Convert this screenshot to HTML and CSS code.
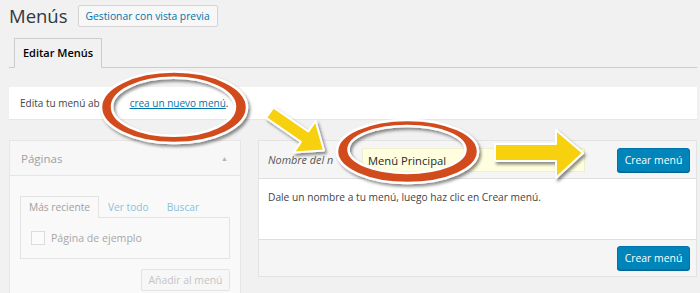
FILE: index.html
```html
<!DOCTYPE html>
<html lang="es">
<head>
<meta charset="utf-8">
<title>Menús</title>
<link rel="stylesheet" href="styles.css">
</head>
<body>
<div class="wrap">
  <div class="head">
    <h1 class="title">Menús</h1>
    <a class="btn-secondary">Gestionar con vista previa</a>
  </div>
  <nav class="tabs">
    <a class="tab">Editar Menús</a>
  </nav>
  <div class="notice">
    <p>Edita tu menú ab<span class="gap"></span><a class="link">crea un nuevo menú</a>.</p>
  </div>
  <div class="cols">
    <div class="side">
      <div class="side-head">
        <span>Páginas</span>
        <span class="caret">▲</span>
      </div>
      <div class="side-body">
        <div class="itabs">
          <span class="itab active">Más reciente</span>
          <span class="itab">Ver todo</span>
          <span class="itab">Buscar</span>
        </div>
        <div class="itab-panel">
          <label class="check"><span class="box"></span>Página de ejemplo</label>
        </div>
        <div class="side-actions">
          <span class="btn-disabled">Añadir al menú</span>
        </div>
      </div>
    </div>
    <div class="main">
      <div class="main-head">
        <span class="name-label">Nombre del n</span>
        <span class="name-input">Menú Principal</span>
        <span class="spacer"></span>
        <a class="btn-primary">Crear menú</a>
      </div>
      <div class="main-body">
        <p>Dale un nombre a tu menú, luego haz clic en Crear menú.</p>
      </div>
      <div class="main-foot">
        <a class="btn-primary">Crear menú</a>
      </div>
    </div>
  </div>
  <svg class="annot" width="700" height="293" viewBox="0 0 700 293">
    <defs>
      <filter id="sh" x="-20%" y="-30%" width="140%" height="160%">
        <feDropShadow dx="2" dy="2.5" stdDeviation="1.6" flood-color="#000" flood-opacity="0.45"/>
      </filter>
    </defs>
    <path filter="url(#sh)" fill-rule="evenodd" fill="#d24c1f" stroke="#fff" stroke-width="2.5"
      d="M101,107.3 a73,35.7 0 1,0 146,0 a73,35.7 0 1,0 -146,0 Z
         M112,106.8 a61.5,29 0 1,0 123,0 a61.5,29 0 1,0 -123,0 Z"/>
    <path filter="url(#sh)" fill-rule="evenodd" fill="#d24c1f" stroke="#fff" stroke-width="2.5"
      d="M337,151.5 a70.5,31.5 0 1,0 141,0 a70.5,31.5 0 1,0 -141,0 Z
         M348.5,149.5 a58.5,23.5 0 1,0 117,0 a58.5,23.5 0 1,0 -117,0 Z"/>
    <polygon filter="url(#sh)" points="273.4,107.4 308.3,131.5 315.6,121 324,150.5 293.6,152.6 300.9,141.9 266.1,117.9" fill="#f7d10f" stroke="#fff" stroke-width="2" stroke-linejoin="round"/>
    <polygon filter="url(#sh)" points="495,144 556,144 556,130 583,153 556,178 556,161 495,161" fill="#f7d10f" stroke="#fff" stroke-width="2" stroke-linejoin="round"/>
  </svg>
</div>
</body>
</html>
```
FILE: styles.css
```css
html, body {
  margin: 0;
  padding: 0;
  background: #f1f1f1;
}
body {
  font-family: "Open Sans", "Noto Sans", sans-serif;
  font-size: 10.2px;
  color: #444;
  width: 700px;
  height: 293px;
  overflow: hidden;
  position: relative;
}
.wrap {
  padding: 5px 3px 0 9px;
}
.head {
  display: flex;
  align-items: center;
  gap: 10px;
  height: 22px;
}
.title {
  margin: 0;
  font-size: 18.5px;
  font-weight: 400;
  line-height: 22px;
  color: #32373c;
}
.btn-secondary {
  display: inline-block;
  box-sizing: border-box;
  width: 140px;
  height: 22px;
  line-height: 20px;
  text-align: center;
  border: 1px solid #d4d4d4;
  border-radius: 2px;
  background: #f7f7f7;
  color: #0073aa;
  font-size: 10.3px;
}
.tabs {
  margin-top: 11px;
  border-bottom: 1px solid #ccc;
  height: 29px;
  display: flex;
}
.tab {
  margin-left: 5px;
  width: 88px;
  text-align: center;
  line-height: 28px;
  border: 1px solid #ccc;
  border-bottom: 1px solid #f1f1f1;
  background: #f1f1f1;
  color: #000;
  font-size: 11px;
  font-weight: 600;
  box-sizing: border-box;
  height: 30px;
}
.notice {
  margin-top: 19px;
  background: #fff;
  height: 32px;
  box-shadow: 0 1px 1px rgba(0,0,0,.04);
}
.notice p {
  margin: 0;
  padding: 0 11px;
  line-height: 32px;
  font-size: 10px;
  color: #444;
}
.gap {
  display: inline-block;
  width: 30px;
}
.link {
  color: #0073aa;
  text-decoration: underline;
}
.cols {
  margin-top: 21px;
  display: flex;
  gap: 17px;
  align-items: flex-start;
}
.side {
  width: 232px;
  box-sizing: border-box;
  border: 1px solid #e6e6e6;
  background: #f7f7f7;
  height: 170px;
}
.side-head {
  height: 34px;
  border-bottom: 1px solid #e6e6e6;
  display: flex;
  align-items: center;
  justify-content: space-between;
  padding: 0 12px 0 11px;
  font-size: 11.5px;
  color: #a0a0a0;
}
.caret {
  font-size: 7px;
  color: #b4b4b4;
}
.side-body {
  padding: 20px 10px 0 10px;
  background: #f9f9f9;
  height: 140px;
}
.itabs {
  display: flex;
  height: 21px;
}
.itab {
  padding: 0 8px;
  line-height: 21px;
  color: #8cc1dc;
  font-size: 10.2px;
  white-space: nowrap;
  border: 1px solid transparent;
  border-bottom: none;
  box-sizing: border-box;
  height: 22px;
  margin-bottom: -1px;
}
.itab.active {
  color: #a0a0a0;
  border-color: #e3e3e3;
  background: #f9f9f9;
  position: relative;
}
.itab-panel {
  border: 1px solid #e3e3e3;
  height: 40px;
  display: flex;
  align-items: center;
  padding: 0 10px;
}
.check {
  display: flex;
  align-items: center;
  gap: 6px;
  color: #a8a8a8;
  font-size: 10.6px;
}
.box {
  width: 12px;
  height: 12px;
  border: 1px solid #dcdcdc;
  background: #fbfbfb;
}
.side-actions {
  display: flex;
  justify-content: flex-end;
  margin-top: 10px;
}
.btn-disabled {
  box-sizing: border-box;
  width: 89px;
  text-align: center;
  height: 22px;
  line-height: 20px;
  border: 1px solid #e3e3e3;
  border-radius: 2px;
  background: #f7f7f7;
  color: #c4c4c4;
  font-size: 10.4px;
}
.main {
  width: 439px;
  box-sizing: border-box;
  border: 1px solid #e3e3e3;
  background: #fff;
}
.main-head {
  height: 37px;
  background: #f5f5f5;
  border-bottom: 1px solid #dfdfdf;
  display: flex;
  align-items: center;
  padding: 0 6px 0 9px;
}
.name-label {
  font-style: italic;
  color: #555;
  font-size: 10.8px;
  width: 94px;
}
.name-input {
  width: 223px;
  height: 24px;
  line-height: 24px;
  box-sizing: border-box;
  padding: 0 5px;
  background: #ffffe0;
  border: 1px solid #efefcf;
  color: #23282d;
  font-size: 11.2px;
}
.spacer {
  flex: 1;
}
.btn-primary {
  display: inline-block;
  width: 73px;
  text-align: center;
  height: 24px;
  line-height: 22px;
  box-sizing: border-box;
  border: 1px solid #0073aa;
  border-radius: 3px;
  background: #0085ba;
  color: #fff;
  font-size: 10.4px;
  box-shadow: 0 1px 0 #006799;
}
.main-body {
  height: 60px;
  padding: 0 9px;
}
.main-body p {
  margin: 0;
  padding-top: 9px;
  line-height: 18px;
  font-size: 10.2px;
  color: #444;
}
.main-foot {
  height: 36px;
  background: #f5f5f5;
  border-top: 1px solid #dfdfdf;
  display: flex;
  align-items: center;
  justify-content: flex-end;
  padding: 0 6px;
}
.annot {
  position: absolute;
  left: 0;
  top: 0;
  pointer-events: none;
}
```
